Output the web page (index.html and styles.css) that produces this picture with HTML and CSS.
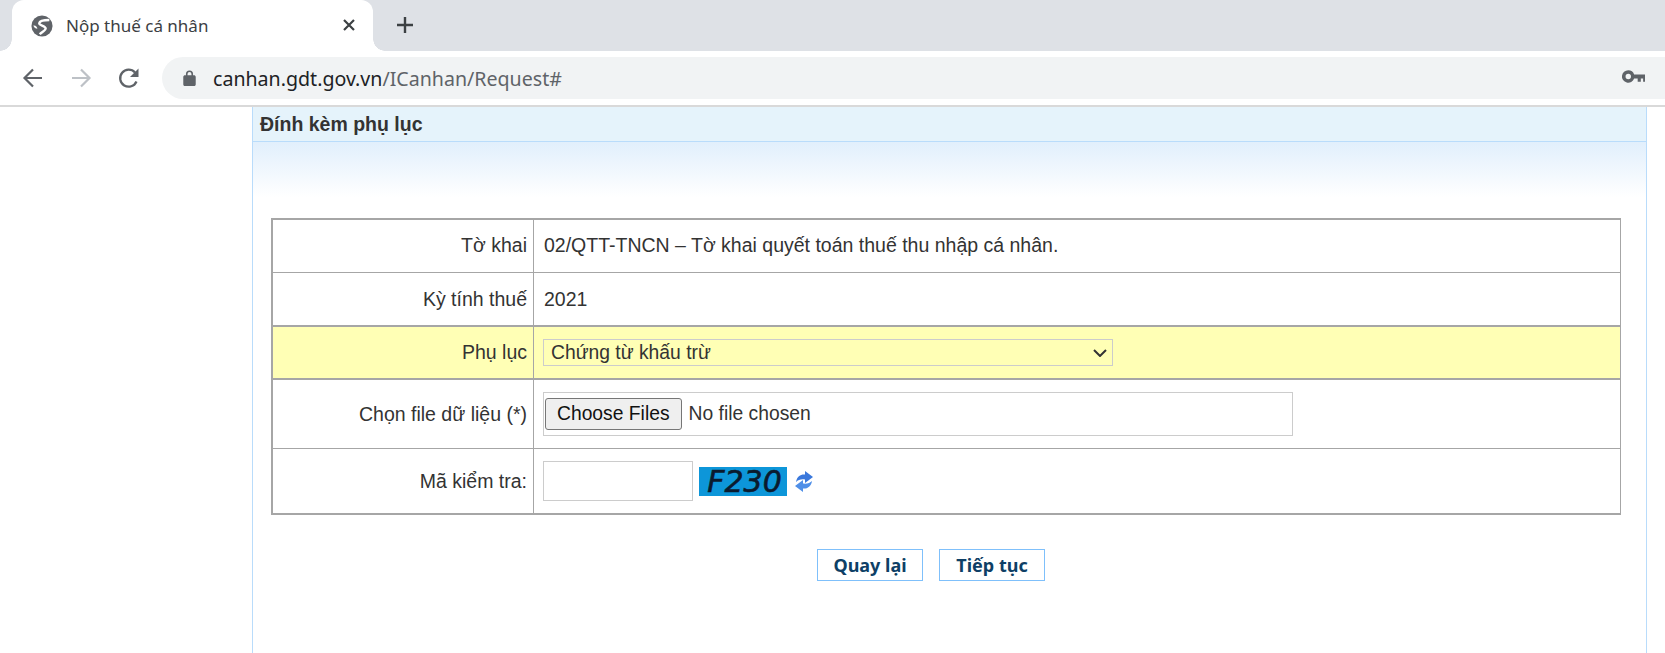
FILE: index.html
```html
<!DOCTYPE html>
<html lang="vi">
<head>
<meta charset="utf-8">
<title>Nộp thuế cá nhân</title>
<link rel="stylesheet" href="styles.css">
</head>
<body>
<div class="tabstrip">
  <div class="tab">
    <svg class="favicon" viewBox="0 0 24 24"><circle cx="12" cy="12" r="11.500" fill="#5f6368"/><path fill="none" stroke="#fff" stroke-width="2.600" d="M20 5.500C15.500 5.500 9.500 6 9 9c-.4 2.500 6.500 2.500 7 5.500.4 2.300-4 4-6.500 6.500"/><path fill="#fff" d="M2.500 11.500c2.500-.5 4 1 4.500 3.500-2 0-3.500-.8-4.500-3.500z"/></svg>
    <span class="tab-title">Nộp thuế cá nhân</span>
    <svg class="tab-close" viewBox="0 0 14 14"><path d="M2 2l10 10M12 2L2 12" stroke="#3c4043" stroke-width="2.200" fill="none"/></svg>
  </div>
  <svg class="new-tab" viewBox="0 0 18 18"><path d="M9 1v16M1 9h16" stroke="#3c4043" stroke-width="2.400" fill="none"/></svg>
</div>
<div class="toolbar">
  <svg class="nav-icon" viewBox="0 0 24 24"><path d="M21 12H4M12 3.500L3.500 12l8.500 8.500" stroke="#5f6368" stroke-width="2.200" fill="none"/></svg>
  <svg class="nav-icon" viewBox="0 0 24 24"><path d="M3 12h17M12 3.500l8.500 8.500-8.500 8.500" stroke="#bdc1c6" stroke-width="2.200" fill="none"/></svg>
  <svg class="nav-icon" viewBox="0 0 24 24"><path d="M19.500 15.500A8.500 8.500 0 1 1 18 6.500" stroke="#5f6368" stroke-width="2.300" fill="none"/><path d="M21.500 2.500v8.500H13z" fill="#5f6368"/></svg>
  <div class="omnibox">
    <svg class="lock" viewBox="0 0 14 18"><path fill="#5f6368" d="M12 6h-1V4.500a4 4 0 0 0-8 0V6H2C1 6 0 6.800 0 7.800v8.400C0 17.200 1 18 2 18h10c1 0 2-.8 2-1.800V7.800C14 6.800 13 6 12 6zM4.800 6V4.500a2.200 2.200 0 0 1 4.400 0V6z"/></svg>
    <span class="url"><span class="url-host">canhan.gdt.gov.vn</span>/ICanhan/Request#</span>
    <svg class="key" viewBox="0 0 22 12"><path fill="#5f6368" fill-rule="evenodd" d="M6 0a6 6 0 1 0 5.600 8H15v3h3V8h2.200V11H22V4H11.600A6 6 0 0 0 6 0zm0 3.400a2.600 2.600 0 1 1 0 5.200 2.600 2.600 0 0 1 0-5.200z"/></svg>
  </div>
</div>
<div class="separator"></div>
<main class="panel">
  <h1 class="panel-title">Đính kèm phụ lục</h1>
  <div class="panel-fade"></div>
  <table class="form-table">
    <tr class="row-1">
      <td class="label">Tờ khai</td>
      <td class="value">02/QTT-TNCN – Tờ khai quyết toán thuế thu nhập cá nhân.</td>
    </tr>
    <tr class="row-2">
      <td class="label">Kỳ tính thuế</td>
      <td class="value">2021</td>
    </tr>
    <tr class="row-3 highlight">
      <td class="label">Phụ lục</td>
      <td class="value">
        <select class="select"><option>Chứng từ khấu trừ</option></select>
      </td>
    </tr>
    <tr class="row-4">
      <td class="label">Chọn file dữ liệu (*)</td>
      <td class="value"><div class="file-box"><input class="file" type="file" multiple></div></td>
    </tr>
    <tr class="row-5">
      <td class="label">Mã kiểm tra:</td>
      <td class="value">
        <div class="captcha-row">
          <input class="captcha-input" type="text">
          <span class="captcha">F230</span>
          <svg class="refresh" viewBox="0 0 18 23">
            <path fill="#3a78dc" d="M1 12C2 6 6 4 10 4.500V1l8 6-8 6V9.500C6 9 3 10 1 12z"/>
            <path fill="#4f8fe8" d="M17 11c-1 6-5 8-9 7.500V22l-8-6 8-6v3.500c4 .5 7-.5 9-2.500z"/>
          </svg>
        </div>
      </td>
    </tr>
  </table>
  <div class="actions">
    <button class="action" type="button">Quay lại</button>
    <button class="action" type="button">Tiếp tục</button>
  </div>
</main>
</body>
</html>
```

FILE: styles.css
```css
* { box-sizing: border-box; }
html, body { margin: 0; padding: 0; height: 653px; overflow: hidden; background: #fff; }
body { font-family: "Liberation Sans", Arial, sans-serif; color: #333; }

.tabstrip { height: 51px; background: #dee1e6; display: flex; align-items: center; padding-left: 12px; }
.tab { position: relative; width: 361px; height: 51px; background: #fff; border-radius: 12px 12px 0 0; display: flex; align-items: center; padding: 0 17px 1px 19px; }
.tab::before, .tab::after { content: ""; position: absolute; bottom: 0; width: 12px; height: 12px; }
.tab::before { left: -12px; background: radial-gradient(circle at 0 0, #dee1e6 11.500px, #fff 12px); }
.tab::after { right: -12px; background: radial-gradient(circle at 100% 0, #dee1e6 11.500px, #fff 12px); }
.favicon { width: 22px; height: 22px; flex: none; margin-top: 1px; }
.tab-title { font-family: "Noto Sans", sans-serif; font-size: 17px; color: #3c4043; margin-left: 13px; flex: 1; white-space: nowrap; }
.tab-close { width: 14px; height: 14px; flex: none; }
.new-tab { width: 18px; height: 18px; margin-left: 23px; margin-bottom: 1px; }

.toolbar { height: 54px; background: #fff; display: flex; align-items: center; padding: 0 0 0 21px; }
.nav-icon { width: 24px; height: 24px; margin-right: 24px; flex: none; }
.omnibox { flex: 1; height: 42px; margin-left: -3px; background: #f1f3f4; border-radius: 21px 0 0 21px; display: flex; align-items: center; padding: 0 20px 2px 21px; }
.lock { width: 13px; height: 16px; flex: none; margin-top: 2px; }
.url { font-family: "Noto Sans", sans-serif; font-size: 19.600px; color: #5f6368; margin-left: 17px; flex: 1; white-space: nowrap; margin-top: 2px; }
.url-host { color: #202124; }
.key { width: 23px; height: 13px; flex: none; margin-bottom: 1px; }
.separator { height: 2px; background: #d9d9d9; }

.panel { margin-left: 252px; width: 1395px; height: 546px; border-left: 1px solid #b9dcfb; border-right: 1px solid #b9dcfb; }
.panel-title { margin: 0; height: 35px; padding: 0 7px; background: #e5f3fb; border-bottom: 1px solid #b9dcfb; font-size: 19.500px; line-height: 35px; font-weight: bold; color: #333; }
.panel-fade { height: 55px; background: linear-gradient(#e1effc, #fff); }

.form-table { margin: 21px 0 0 18px; width: 1350px; border-collapse: separate; border-spacing: 0; border: solid #a6a6a6; border-width: 2px 1px 2px 2px; font-size: 19.500px; table-layout: fixed; }
.form-table td { padding: 0; border-bottom: 1px solid #a6a6a6; }
.form-table tr:last-child td { border-bottom: 0; }
.label { width: 261px; text-align: right; padding-right: 6px !important; border-right: 1px solid #a6a6a6; }
.value { padding-left: 10px !important; }
.row-1 td { height: 53px; padding-bottom: 2px; }
.row-2 td { height: 54px; border-bottom-width: 2px !important; }
.row-3 td { height: 53px; border-bottom-width: 2px !important; }
.row-4 td { height: 69px; }
.row-5 td { height: 64px; }
.highlight td { background: #ffffb5; }

.select { display: block; width: 570px; height: 27px; margin-left: -1px; padding: 0 0 0 7px; border: 1px solid #ccc; border-radius: 0; appearance: none; -webkit-appearance: none; background: #ffffb5 url("data:image/svg+xml,%3Csvg xmlns='http://www.w3.org/2000/svg' width='14' height='8'%3E%3Cpath d='M1 1l6 6 6-6' fill='none' stroke='%23333' stroke-width='2'/%3E%3C/svg%3E") no-repeat right 5px center; font: 19.300px "Liberation Sans", Arial, sans-serif; color: #333; }
.file-box { width: 750px; height: 44px; margin-left: -1px; border: 1px solid #ccc; padding: 5px 1px; }
.file { font: 19.300px "Liberation Sans", Arial, sans-serif; color: #333; width: 400px; display: block; }
.file::file-selector-button { height: 32px; padding: 0 11px; margin-right: 7px; border: 1px solid #767676; border-radius: 3px; background: #efefef; font: inherit; color: #111; }
.captcha-row { display: flex; align-items: center; margin-left: -1px; }
.captcha-input { width: 150px; height: 40px; border: 1px solid #ccc; padding: 0 4px; margin: 0; background: #fff; }
.captcha { width: 88px; height: 29px; margin-left: 6px; padding-left: 3px; background: #0d96d9; color: #0a1a2e; font: italic 400 30px/29px "DejaVu Sans", sans-serif; -webkit-text-stroke: .6px #0a1a2e; text-align: center; white-space: nowrap; }
.refresh { width: 18px; height: 23px; margin-left: 8px; }

.actions { display: flex; gap: 16px; margin-top: 34px; padding-left: 564px; }
.action { width: 106px; height: 32px; padding: 0; background: #fff; border: 1px solid #7fc0fb; border-radius: 0; font: bold 18px "Noto Sans", sans-serif; color: #0e3f66; }
```
